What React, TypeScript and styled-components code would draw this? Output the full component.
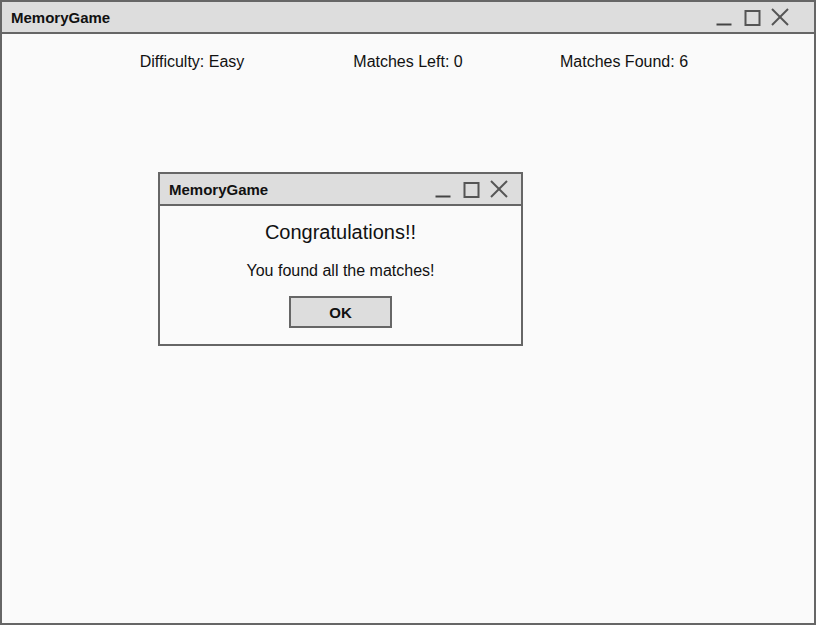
import React from "react";
import styled, { createGlobalStyle } from "styled-components";

const Global = createGlobalStyle`
  html, body { margin: 0; padding: 0; background: #fafafa; }
  body { font-family: "Liberation Sans", Arial, sans-serif; color: #111; }
`;

const Window = styled.div`
  box-sizing: border-box;
  width: 816px;
  height: 625px;
  border: 2px solid #666;
  background: #fafafa;
  display: flex;
  flex-direction: column;
  position: relative;
`;

const TitleBar = styled.div<{ $padRight: number }>`
  box-sizing: border-box;
  height: 32px;
  flex: none;
  background: #dddddd;
  border-bottom: 2px solid #666;
  display: flex;
  align-items: center;
  justify-content: space-between;
  padding: 0 ${(p) => p.$padRight}px 0 9px;
`;

const Title = styled.span`
  font-weight: bold;
  font-size: 15px;
  color: #111;
`;

const Controls = styled.div`
  display: flex;
  gap: 8px;
  align-items: center;
`;

const IconBox = styled.svg`
  width: 20px;
  height: 20px;
  display: block;
`;

const Stats = styled.div`
  display: grid;
  grid-template-columns: repeat(3, 216px);
  justify-content: center;
  padding-top: 19px;
`;

const Stat = styled.div`
  text-align: center;
  font-size: 16px;
  line-height: 18px;
`;

const Dialog = styled.div`
  position: absolute;
  left: 156px;
  top: 170px;
  box-sizing: border-box;
  width: 365px;
  height: 174px;
  border: 2px solid #666;
  background: #fafafa;
  display: flex;
  flex-direction: column;
`;

const DialogBody = styled.div`
  display: flex;
  flex-direction: column;
  align-items: center;
  padding-top: 14px;
`;

const Heading = styled.div`
  font-size: 20px;
  line-height: 24px;
`;

const Message = styled.div`
  font-size: 16px;
  line-height: 18px;
  margin-top: 18px;
`;

const OkButton = styled.button`
  box-sizing: border-box;
  margin-top: 16px;
  width: 103px;
  height: 32px;
  border: 2px solid #666;
  background: #dddddd;
  font-family: "Liberation Sans", Arial, sans-serif;
  font-weight: bold;
  font-size: 15px;
  color: #111;
  padding: 0;
`;

function WindowControls() {
  return (
    <Controls>
      <IconBox viewBox="0 0 20 20">
        <line x1="2.5" y1="17.5" x2="17.5" y2="17.5" stroke="#444" strokeWidth="2" />
      </IconBox>
      <IconBox viewBox="0 0 20 20">
        <rect x="3.5" y="4" width="14" height="14" fill="none" stroke="#555" strokeWidth="2" />
      </IconBox>
      <IconBox viewBox="0 0 20 20">
        <line x1="2" y1="2" x2="18" y2="18" stroke="#555" strokeWidth="2" />
        <line x1="18" y1="2" x2="2" y2="18" stroke="#555" strokeWidth="2" />
      </IconBox>
    </Controls>
  );
}

export default function App() {
  return (
    <>
      <Global />
      <Window>
        <TitleBar $padRight={24}>
          <Title>MemoryGame</Title>
          <WindowControls />
        </TitleBar>
        <Stats>
          <Stat>Difficulty: Easy</Stat>
          <Stat>Matches Left: 0</Stat>
          <Stat>Matches Found: 6</Stat>
        </Stats>
        <Dialog>
          <TitleBar $padRight={12}>
            <Title>MemoryGame</Title>
            <WindowControls />
          </TitleBar>
          <DialogBody>
            <Heading>Congratulations!!</Heading>
            <Message>You found all the matches!</Message>
            <OkButton>OK</OkButton>
          </DialogBody>
        </Dialog>
      </Window>
    </>
  );
}
